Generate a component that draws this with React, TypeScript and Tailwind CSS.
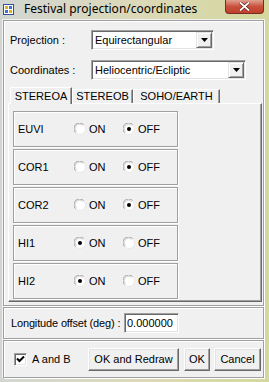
import React, { useState } from 'react';

const instruments = ['EUVI', 'COR1', 'COR2', 'HI1', 'HI2'];

const Radio = ({ checked }: { checked: boolean }) => (
  <svg width="12" height="12" viewBox="0 0 12 12" className="shrink-0">
    <circle cx="6" cy="6" r="5.5" fill="#ffffff" />
    <path d="M1.6 9.6 A5.2 5.2 0 0 1 9.6 1.6" stroke="#9a9a9a" strokeWidth="1" fill="none" />
    <path d="M2.6 8.6 A3.9 3.9 0 0 1 8.6 2.6" stroke="#d6d6d6" strokeWidth="1" fill="none" />
    <path d="M9.9 2.2 A5.2 5.2 0 0 1 2.2 9.9" stroke="#e8e8e8" strokeWidth="1" fill="none" />
    {checked && <circle cx="6" cy="6" r="2" fill="#000000" />}
  </svg>
);

const Combo = ({ value, width }: { value: string; width: string }) => (
  <div
    className={`${width} h-[20px] flex items-center bg-white border border-t-[#a0a0a0] border-l-[#a0a0a0] border-r-[#ffffff] border-b-[#ffffff] shadow-[inset_1px_1px_0_#696969,inset_-1px_-1px_0_#e3e3e3]`}
  >
    <span className="flex-1 pl-[3px] leading-none">{value}</span>
    <div className="w-[16px] h-[16px] mr-[1px] flex items-center justify-center bg-[#f0f0f0] border border-t-[#e3e3e3] border-l-[#e3e3e3] border-r-[#696969] border-b-[#696969] shadow-[inset_1px_1px_0_#fff,inset_-1px_-1px_0_#a0a0a0]">
      <svg width="7" height="4" viewBox="0 0 7 4">
        <path d="M0 0 H7 L3.5 4 Z" fill="#000" />
      </svg>
    </div>
  </div>
);

const Button = ({ label, width }: { label: string; width: string }) => (
  <button
    className={`${width} h-[23px] bg-[#f0f0f0] border border-t-[#ffffff] border-l-[#ffffff] border-r-[#696969] border-b-[#696969] shadow-[inset_-1px_-1px_0_#a0a0a0,inset_1px_1px_0_#e3e3e3] leading-none`}
  >
    {label}
  </button>
);

const Etched = ({ className, children }: { className: string; children?: React.ReactNode }) => (
  <div className={`border border-[#a0a0a0] shadow-[inset_1px_1px_0_#fff,1px_1px_0_#fff] ${className}`}>{children}</div>
);

const tabs = [
  { name: 'STEREOA', w: 'w-[62px]' },
  { name: 'STEREOB', w: 'w-[61px]' },
  { name: 'SOHO/EARTH', w: 'w-[87px]' },
];

export default function App() {
  const [state, setState] = useState<Record<string, boolean>>({
    EUVI: false,
    COR1: false,
    COR2: false,
    HI1: true,
    HI2: true,
  });
  const [tab, setTab] = useState('STEREOA');

  return (
    <div className="w-[269px] h-[382px] overflow-hidden flex flex-col bg-gradient-to-r from-[#d2d6d2] via-[#dcd9b8] to-[#d4d89c] font-['Liberation_Sans',Arial,sans-serif] text-[11px] text-black">
      {/* title bar */}
      <div className="h-[19px] flex items-start shrink-0">
        <div className="mt-[4px] ml-[3px] w-[11px] h-[11px] border border-[#3050a0] bg-white grid grid-cols-2 gap-px p-px">
          <div className="bg-[#e0b020]" />
          <div className="bg-[#4070d0]" />
          <div className="bg-[#4070d0]" />
          <div className="bg-[#e0b020]" />
        </div>
        <span className="ml-[10px] mt-px font-['Noto_Sans',sans-serif] text-[12px] leading-[16px]">
          Festival projection/coordinates
        </span>
        <div className="ml-auto mr-[5px] w-[39px] h-[14px] rounded-b-[4px] border border-t-0 border-[#7a2a20] bg-gradient-to-b from-[#e0a090] via-[#c8503c] to-[#c0402c] flex items-center justify-center">
          <svg width="11" height="9" viewBox="0 0 11 9">
            <path d="M1 0.5 L10 8.5 M10 0.5 L1 8.5" stroke="#5a2018" strokeWidth="3.2" />
            <path d="M1 0.5 L10 8.5 M10 0.5 L1 8.5" stroke="#ffffff" strokeWidth="1.8" />
          </svg>
        </div>
      </div>

      {/* client area */}
      <div className="ml-[2px] mr-[4px] mb-[4px] flex-1 bg-[#f0f0f0] pt-px px-px flex flex-col gap-px">
        <Etched className="h-[286px] flex flex-col pt-[9px]">
          <div className="flex items-center h-[20px]">
            <span className="ml-[6px] w-[81px]">Projection :</span>
            <Combo value="Equirectangular" width="w-[123px]" />
          </div>
          <div className="flex items-center h-[20px] mt-[10px]">
            <span className="ml-[6px] w-[81px]">Coordinates :</span>
            <Combo value="Heliocentric/Ecliptic" width="w-[155px]" />
          </div>

          {/* tabs */}
          <div className="mt-[7px] ml-[4px] mr-[1px] flex flex-col">
            <div className="flex items-end h-[16px] pl-[2px]">
              {tabs.map((t) => {
                const active = t.name === tab;
                return (
                  <button
                    key={t.name}
                    onClick={() => setTab(t.name)}
                    className={`${t.w} shrink-0 text-center leading-none border-t border-l border-r border-t-white border-l-white border-r-[#696969] shadow-[inset_-1px_0_0_#a0a0a0] bg-[#f0f0f0] ${
                      active ? 'h-[17px] z-10 -mb-px' : 'h-[14px]'
                    }`}
                  >
                    {t.name}
                  </button>
                );
              })}
            </div>
            <div className="h-[199px] border border-t-white border-l-white border-r-[#696969] border-b-[#696969] shadow-[inset_-1px_-1px_0_#a0a0a0] pt-[7px] pl-[4px] flex flex-col gap-[2px]">
              {instruments.map((name) => (
                <Etched key={name} className="w-[165px] h-[36px] flex items-center pl-[4px]">
                  <span className="w-[56px]">{name}</span>
                  <label
                    className="w-[49px] flex items-center gap-[3px]"
                    onClick={() => setState({ ...state, [name]: true })}
                  >
                    <Radio checked={state[name]} />
                    <span>ON</span>
                  </label>
                  <label
                    className="flex items-center gap-[3px]"
                    onClick={() => setState({ ...state, [name]: false })}
                  >
                    <Radio checked={!state[name]} />
                    <span>OFF</span>
                  </label>
                </Etched>
              ))}
            </div>
          </div>
        </Etched>

        <Etched className="h-[32px] flex items-center">
          <span className="ml-[7px] w-[113px] shrink-0 whitespace-nowrap tracking-[-0.15px]">Longitude offset (deg) :</span>
          <div className="w-[55px] h-[20px] shrink-0 flex items-center bg-white border border-t-[#a0a0a0] border-l-[#a0a0a0] border-r-white border-b-white shadow-[inset_1px_1px_0_#696969,inset_-1px_-1px_0_#e3e3e3] pl-[2px] leading-none">
            0.000000
          </div>
        </Etched>

        <Etched className="h-[38px] flex items-center">
          <div className="ml-[10px] w-[13px] h-[13px] bg-white border border-t-[#a0a0a0] border-l-[#a0a0a0] border-r-white border-b-white shadow-[inset_1px_1px_0_#696969,inset_-1px_-1px_0_#e3e3e3] flex items-center justify-center">
            <svg width="9" height="9" viewBox="0 0 9 9">
              <path d="M1 3.5 L3.5 6 L8 1.5" stroke="#000" strokeWidth="2" fill="none" />
            </svg>
          </div>
          <span className="ml-[5px] w-[56px]">A and B</span>
          <Button label="OK and Redraw" width="w-[91px]" />
          <div className="w-[5px]" />
          <Button label="OK" width="w-[26px]" />
          <div className="w-[4px]" />
          <Button label="Cancel" width="w-[47px]" />
        </Etched>
      </div>
    </div>
  );
}
